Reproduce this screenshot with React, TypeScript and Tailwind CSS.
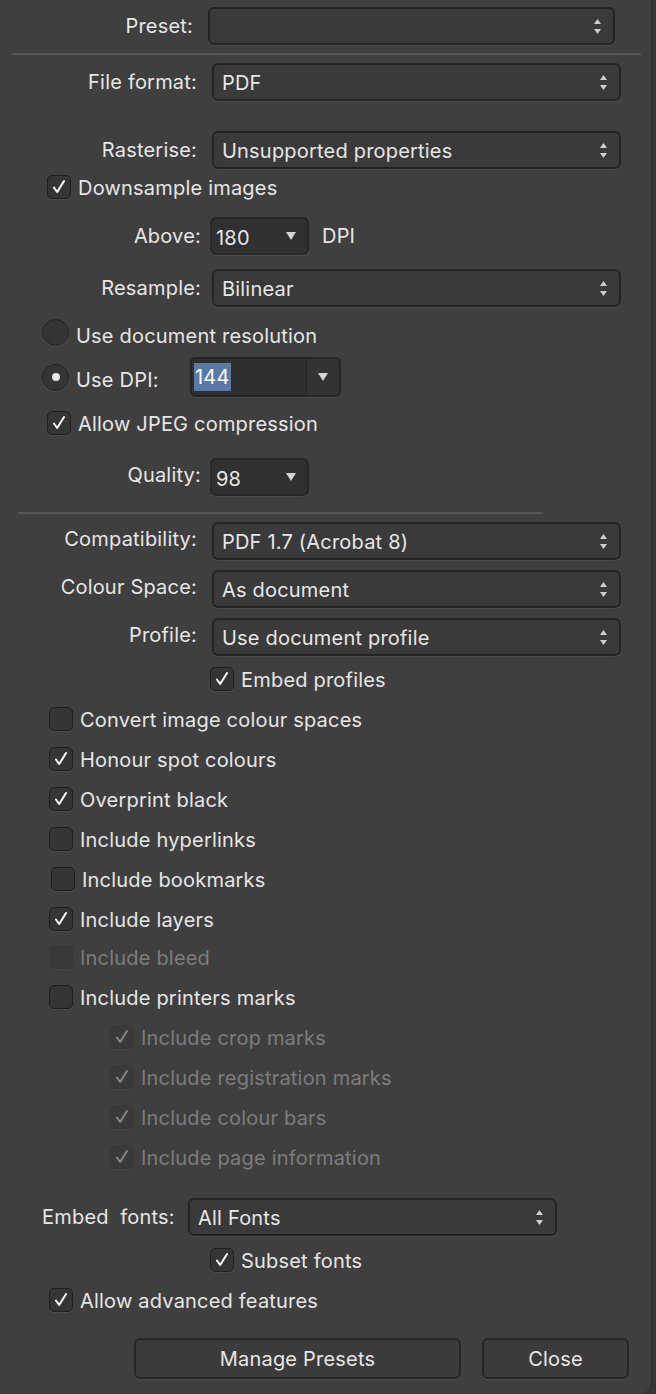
import type { ReactNode } from 'react'

function Stepper() {
  return (
    <svg width="7" height="15" viewBox="0 0 7 15" className="shrink-0">
      <path d="M0 5 L3.5 0 L7 5 Z" fill="#cfcfcf" />
      <path d="M0 10 L3.5 15 L7 10 Z" fill="#cfcfcf" />
    </svg>
  )
}

function DownArrow() {
  return (
    <svg width="10" height="8" viewBox="0 0 10 8" className="shrink-0">
      <path d="M0 0 L10 0 L5 8 Z" fill="#d4d4d4" />
    </svg>
  )
}

function Check({ color }: { color: string }) {
  return (
    <svg width="24" height="24" viewBox="0 0 24 24">
      <path d="M6.5 12.5 L10 17.5 L17.5 5.5" fill="none" stroke={color} strokeWidth="2.2" strokeLinecap="round" strokeLinejoin="round" />
    </svg>
  )
}

// popup button with up/down stepper
function Select({ value, className }: { value?: string; className: string }) {
  return (
    <div
      className={`flex h-[38px] items-center justify-between rounded-[6px] border-2 border-[#242424] bg-[#3a3a3a] pl-[8px] pr-[12px] shadow-[0_1px_0_#4c4c4c] ${className}`}
    >
      <span className="whitespace-nowrap pt-[2px]">{value}</span>
      <Stepper />
    </div>
  )
}

// small dropdown (darker fill, single arrow)
function Dropdown({ value, className }: { value: string; className: string }) {
  return (
    <div
      className={`flex h-[38px] items-center justify-between rounded-[6px] border-2 border-[#262626] bg-[#303030] pl-[4px] pr-[11px] shadow-[0_1px_0_#4c4c4c] ${className}`}
    >
      <span className="pt-[3px]">{value}</span>
      <DownArrow />
    </div>
  )
}

function Checkbox({
  label,
  checked,
  disabled,
  className,
}: {
  label: string
  checked?: boolean
  disabled?: boolean
  className: string
}) {
  return (
    <div className={`flex h-[24px] items-center ${className}`}>
      <div
        className={
          disabled
            ? 'flex h-[24px] w-[24px] shrink-0 items-center justify-center rounded-[5px] border border-[#383838] bg-[#393939] shadow-[0_1px_0_#454545]'
            : 'flex h-[24px] w-[24px] shrink-0 items-center justify-center rounded-[5px] border border-[#1e1e1e] bg-[#353535] shadow-[0_1px_0_#4c4c4c]'
        }
      >
        {checked && <Check color={disabled ? '#858585' : '#ffffff'} />}
      </div>
      <span className={`ml-[7px] whitespace-nowrap pt-[2px] ${disabled ? 'text-[#7c7c7c]' : ''}`}>{label}</span>
    </div>
  )
}

function Radio({ selected }: { selected?: boolean }) {
  return (
    <div className="flex h-[27px] w-[27px] shrink-0 items-center justify-center rounded-full border border-[#222222] bg-[#353535] shadow-[0_1px_0_#4c4c4c]">
      {selected && <div className="h-[8px] w-[8px] rounded-full bg-[#e6e6e6]" />}
    </div>
  )
}

function Label({ children, className }: { children: ReactNode; className: string }) {
  return <div className={`shrink-0 whitespace-nowrap text-right ${className}`}>{children}</div>
}

export default function App() {
  return (
    <div className="min-h-[1394px] w-[656px] bg-[#373737]">
      <div
        className="flex h-[1394px] w-[652px] flex-col rounded-br-[12px] border-r border-[#2b2b2b] bg-[#3f3f3f] pt-[7px] text-[20px] leading-none tracking-[0.2px] text-[#e6e6e6]"
        style={{ fontFamily: 'Inter, "Noto Sans", sans-serif' }}
      >
        {/* Preset */}
        <div className="flex h-[38px] items-center">
          <Label className="w-[193px]">Preset:</Label>
          <Select className="ml-[15px] w-[407px]" />
        </div>

        <div className="ml-[12px] mt-[8px] h-[2px] w-[629px] bg-[#555555]" />

        {/* File format */}
        <div className="mt-[8px] flex h-[38px] items-center">
          <Label className="w-[197px]">File format:</Label>
          <Select value="PDF" className="ml-[15px] w-[409px]" />
        </div>

        <div className="mt-[30px] flex h-[38px] items-center">
          <Label className="w-[197px]">Rasterise:</Label>
          <Select value="Unsupported properties" className="ml-[15px] w-[409px]" />
        </div>

        <Checkbox label="Downsample images" checked className="ml-[47px] mt-[6px]" />

        <div className="mt-[18px] flex h-[38px] items-center">
          <Label className="w-[201px]">Above:</Label>
          <Dropdown value="180" className="ml-[9px] w-[99px]" />
          <span className="ml-[13px]">DPI</span>
        </div>

        <div className="mt-[14px] flex h-[38px] items-center">
          <Label className="w-[201px]">Resample:</Label>
          <Select value="Bilinear" className="ml-[11px] w-[409px]" />
        </div>

        {/* resolution radios */}
        <div className="ml-[42px] mt-[12px] flex h-[27px] items-center">
          <Radio />
          <span className="ml-[7px] pt-[6px]">Use document resolution</span>
        </div>

        <div className="ml-[42px] mt-[11px] flex h-[40px] items-center">
          <Radio selected />
          <span className="ml-[7px] w-[114px] pt-[6px]">Use DPI:</span>
          <div className="flex h-[40px] w-[151px] overflow-hidden rounded-[5px] border-2 border-[#262626] bg-[#2f2f2f] shadow-[0_1px_0_#4c4c4c]">
            <div className="flex flex-1 items-center pl-[2px]">
              <span className="bg-[#5a7aa6] px-[1px] py-[4px] text-white">144</span>
            </div>
            <div className="flex w-[33px] items-center justify-center border-l border-[#242424] bg-[#333333]">
              <DownArrow />
            </div>
          </div>
        </div>

        <Checkbox label="Allow JPEG compression" checked className="ml-[47px] mt-[14px]" />

        <div className="mt-[23px] flex h-[38px] items-center">
          <Label className="w-[201px] pb-[4px]">Quality:</Label>
          <Dropdown value="98" className="ml-[9px] w-[99px]" />
        </div>

        <div className="ml-[18px] mt-[16px] h-[2px] w-[525px] bg-[#555555]" />

        {/* PDF options */}
        <div className="mt-[8px] flex h-[38px] items-center">
          <Label className="w-[197px] pb-[4px]">Compatibility:</Label>
          <Select value="PDF 1.7 (Acrobat 8)" className="ml-[15px] w-[409px]" />
        </div>

        <div className="mt-[10px] flex h-[38px] items-center">
          <Label className="w-[197px] pb-[4px]">Colour Space:</Label>
          <Select value="As document" className="ml-[15px] w-[409px]" />
        </div>

        <div className="mt-[10px] flex h-[38px] items-center">
          <Label className="w-[197px] pb-[4px]">Profile:</Label>
          <Select value="Use document profile" className="ml-[15px] w-[409px]" />
        </div>

        <Checkbox label="Embed profiles" checked className="ml-[210px] mt-[11px]" />

        <Checkbox label="Convert image colour spaces" className="ml-[49px] mt-[16px]" />
        <Checkbox label="Honour spot colours" checked className="ml-[49px] mt-[16px]" />
        <Checkbox label="Overprint black" checked className="ml-[49px] mt-[16px]" />
        <Checkbox label="Include hyperlinks" className="ml-[49px] mt-[16px]" />
        <Checkbox label="Include bookmarks" className="ml-[51px] mt-[16px]" />
        <Checkbox label="Include layers" checked className="ml-[49px] mt-[16px]" />
        <Checkbox label="Include bleed" disabled className="ml-[49px] mt-[14px]" />
        <Checkbox label="Include printers marks" className="ml-[49px] mt-[16px]" />

        <Checkbox label="Include crop marks" checked disabled className="ml-[110px] mt-[16px]" />
        <Checkbox label="Include registration marks" checked disabled className="ml-[110px] mt-[16px]" />
        <Checkbox label="Include colour bars" checked disabled className="ml-[110px] mt-[16px]" />
        <Checkbox label="Include page information" checked disabled className="ml-[110px] mt-[16px]" />

        {/* fonts */}
        <div className="mt-[29px] flex h-[38px] items-center">
          <span className="ml-[42px] w-[146px] whitespace-pre">Embed  fonts:</span>
          <Select value="All Fonts" className="w-[369px]" />
        </div>

        <Checkbox label="Subset fonts" checked className="ml-[210px] mt-[12px]" />
        <Checkbox label="Allow advanced features" checked className="ml-[49px] mt-[16px]" />

        {/* buttons */}
        <div className="mt-[26px] flex h-[41px]">
          <button className="ml-[134px] w-[327px] rounded-[6px] border-2 border-[#262626] bg-[#3b3b3b] shadow-[0_1px_0_#4c4c4c]">
            Manage Presets
          </button>
          <button className="ml-[21px] w-[147px] rounded-[6px] border-2 border-[#262626] bg-[#3b3b3b] shadow-[0_1px_0_#4c4c4c]">
            Close
          </button>
        </div>
      </div>
    </div>
  )
}
